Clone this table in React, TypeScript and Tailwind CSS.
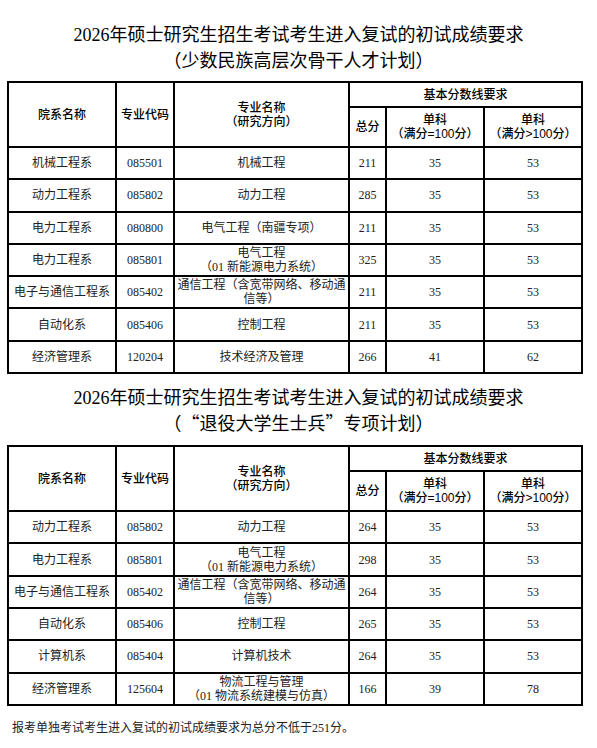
const serif = "font-['Liberation_Serif','Noto_Sans_CJK_SC',serif]"
const cjk = "font-['Noto_Sans_CJK_SC',sans-serif]"
const fw = "[font-feature-settings:'fwid'_1,'chws'_0,'halt'_0]"

interface Row {
  dept: string
  code: string
  major: string[]
  total: string
  s1: string
  s2: string
}

const plan1: Row[] = [
  { dept: "机械工程系", code: "085501", major: ["机械工程"], total: "211", s1: "35", s2: "53" },
  { dept: "动力工程系", code: "085802", major: ["动力工程"], total: "285", s1: "35", s2: "53" },
  { dept: "电力工程系", code: "080800", major: ["电气工程（南疆专项）"], total: "211", s1: "35", s2: "53" },
  { dept: "电力工程系", code: "085801", major: ["电气工程", "（01 新能源电力系统）"], total: "325", s1: "35", s2: "53" },
  { dept: "电子与通信工程系", code: "085402", major: ["通信工程（含宽带网络、移动通信等）"], total: "211", s1: "35", s2: "53" },
  { dept: "自动化系", code: "085406", major: ["控制工程"], total: "211", s1: "35", s2: "53" },
  { dept: "经济管理系", code: "120204", major: ["技术经济及管理"], total: "266", s1: "41", s2: "62" },
]

const plan2: Row[] = [
  { dept: "动力工程系", code: "085802", major: ["动力工程"], total: "264", s1: "35", s2: "53" },
  { dept: "电力工程系", code: "085801", major: ["电气工程", "（01 新能源电力系统）"], total: "298", s1: "35", s2: "53" },
  { dept: "电子与通信工程系", code: "085402", major: ["通信工程（含宽带网络、移动通信等）"], total: "264", s1: "35", s2: "53" },
  { dept: "自动化系", code: "085406", major: ["控制工程"], total: "265", s1: "35", s2: "53" },
  { dept: "计算机系", code: "085404", major: ["计算机技术"], total: "264", s1: "35", s2: "53" },
  { dept: "经济管理系", code: "125604", major: ["物流工程与管理", "（01 物流系统建模与仿真）"], total: "166", s1: "39", s2: "78" },
]

const th = `border-2 border-black font-['Liberation_Sans','Noto_Sans_CJK_SC',sans-serif] ${fw} font-medium text-[12px] leading-[14px] text-center align-middle p-0`
const td = `border-2 border-black ${fw} text-[12px] leading-[14px] text-center align-middle px-[2px] py-0 text-[#222]`

function Title({ children }: { children: React.ReactNode }) {
  return (
    <div className={`${serif} text-center text-[18px] leading-[24px] text-black`}>
      <div>2026年硕士研究生招生考试考生进入复试的初试成绩要求</div>
      <div className={`${cjk} ${fw}`}>
        <span className="inline-block w-[1em] text-right">（</span>
        {children}
        <span className="inline-block w-[1em] text-left">）</span>
      </div>
    </div>
  )
}

function ScoreTable({ rows }: { rows: Row[] }) {
  return (
    <table className={`${serif} ml-[7px] w-[574px] border-collapse table-fixed border-2 border-black`}>
      <colgroup>
        <col className="w-[108px]" />
        <col className="w-[58px]" />
        <col className="w-[175px]" />
        <col className="w-[37px]" />
        <col className="w-[98px]" />
        <col className="w-[98px]" />
      </colgroup>
      <thead>
        <tr className="h-[25px]">
          <th rowSpan={2} className={th}>院系名称</th>
          <th rowSpan={2} className={th}>专业代码</th>
          <th rowSpan={2} className={th}>
            专业名称
            <br />
            （研究方向）
          </th>
          <th colSpan={3} className={th}>基本分数线要求</th>
        </tr>
        <tr className="h-[40px]">
          <th className={th}>总分</th>
          <th className={th}>
            单科
            <br />
            （满分=100分）
          </th>
          <th className={th}>
            单科
            <br />
            （满分&gt;100分）
          </th>
        </tr>
      </thead>
      <tbody>
        {rows.map((r, i) => (
          <tr key={i} className="h-[32.3px]">
            <td className={td}>{r.dept}</td>
            <td className={td}>{r.code}</td>
            <td className={td}>
              {r.major.map((m, j) => (
                <div key={j}>{m}</div>
              ))}
            </td>
            <td className={td}>{r.total}</td>
            <td className={td}>{r.s1}</td>
            <td className={td}>{r.s2}</td>
          </tr>
        ))}
      </tbody>
    </table>
  )
}

export default function App() {
  return (
    <div className="w-[597px] h-[748px] bg-white overflow-hidden pt-[23px] [text-spacing-trim:space-all]">
      <Title>少数民族高层次骨干人才计划</Title>
      <div className="mt-[10px]">
        <ScoreTable rows={plan1} />
      </div>
      <div className="mt-[12px]">
        <Title>“退役大学生士兵”专项计划</Title>
      </div>
      <div className="mt-[11px]">
        <ScoreTable rows={plan2} />
      </div>
      <p className={`${serif} ${fw} ml-[12px] mt-[14px] text-[12px] leading-[16px] text-[#222]`}>
        报考单独考试考生进入复试的初试成绩要求为总分不低于251分。
      </p>
    </div>
  )
}
